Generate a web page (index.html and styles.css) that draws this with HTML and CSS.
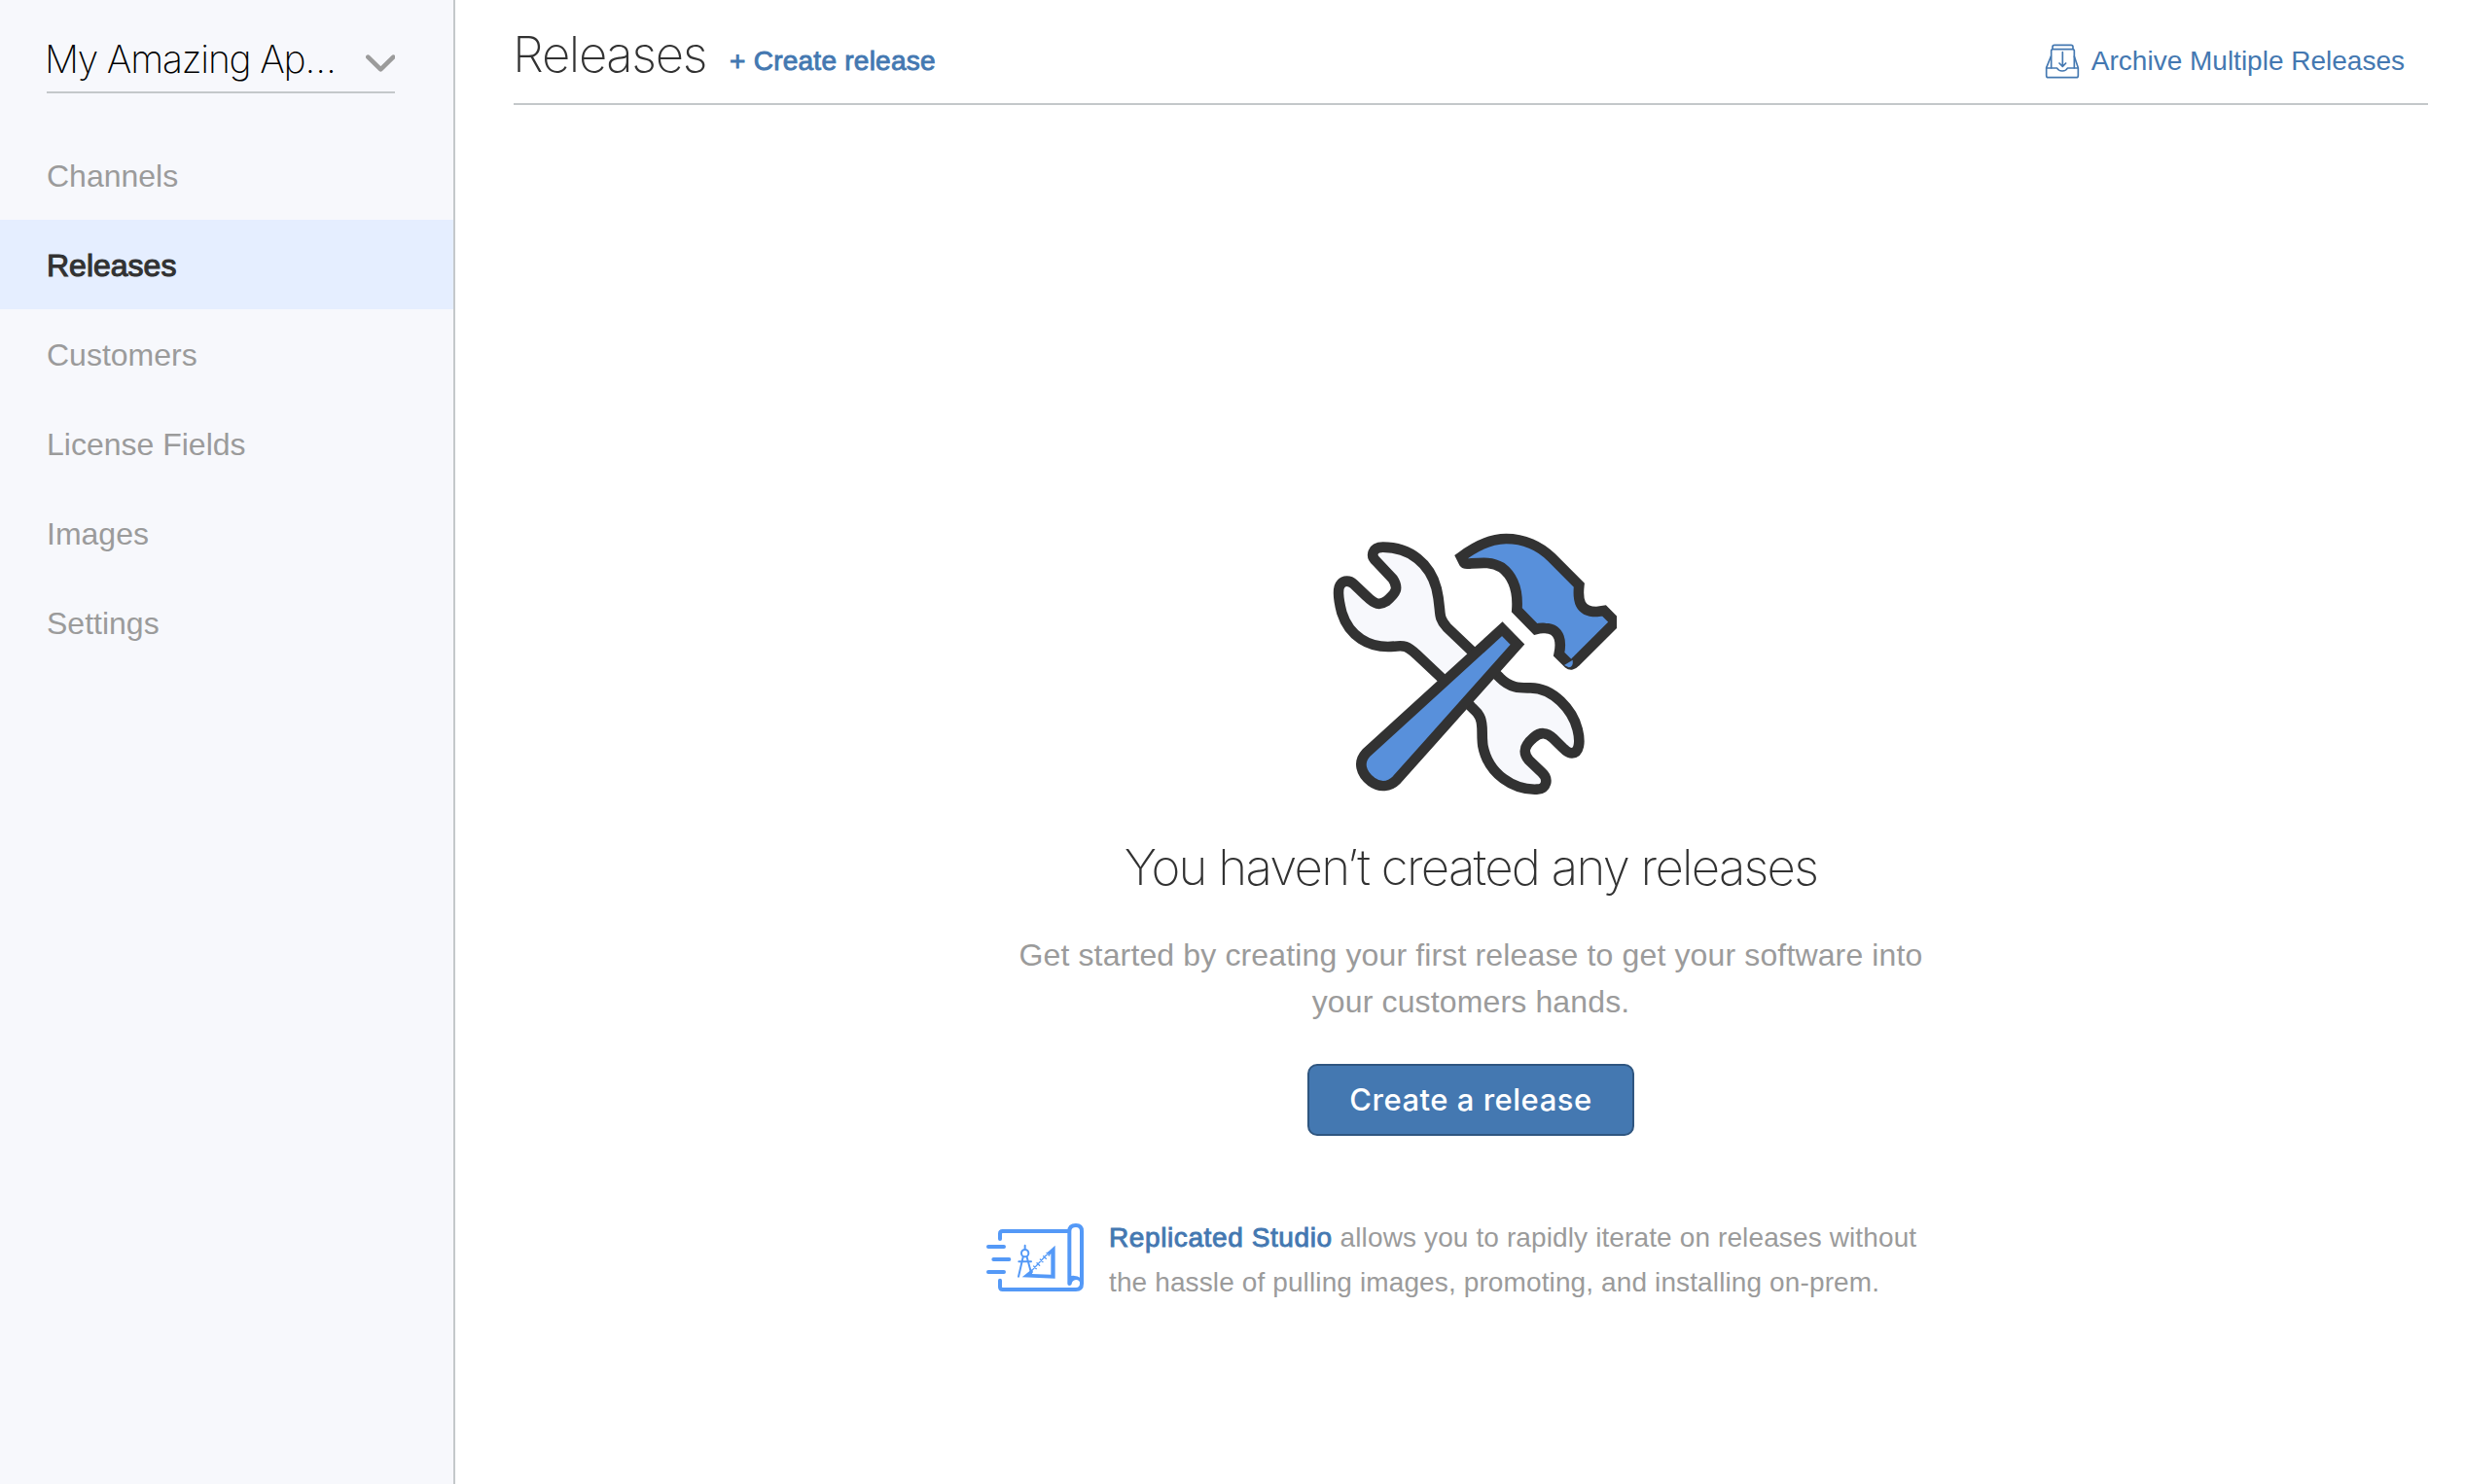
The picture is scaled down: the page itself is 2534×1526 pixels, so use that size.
FILE: index.html
```html
<!DOCTYPE html>
<html lang="en">
<head>
<meta charset="utf-8">
<title>Releases</title>
<link rel="stylesheet" href="styles.css">
</head>
<body>
<div class="app">
  <aside class="sidebar">
    <div class="app-select">
      <span class="app-name">My Amazing Ap…</span>
      <svg class="chevron" viewBox="1128 168 90 54"><path d="M1135 176L1174 214L1213 176"/></svg>
    </div>
    <nav class="nav">
      <a class="nav-item">Channels</a>
      <a class="nav-item active">Releases</a>
      <a class="nav-item">Customers</a>
      <a class="nav-item">License Fields</a>
      <a class="nav-item">Images</a>
      <a class="nav-item">Settings</a>
    </nav>
  </aside>
  <main class="main">
    <header class="header">
      <h1 class="title">Releases</h1>
      <a class="create-link">+ Create release</a>
      <a class="archive-link">
        <svg class="archive-icon" viewBox="68 76 108 108">
          <path d="M92 92V86Q92 80 98 80H149Q155 80 155 86V92"/>
          <path d="M88 150V98Q88 93 93 93H154Q159 93 159 98V150"/>
          <path d="M87 115L73 150V174Q73 180 79 180H165Q171 180 171 174V150L159 115"/>
          <path d="M73 151H106Q110 160 122 160T138 151H171"/>
          <path d="M123 102V144M113 136L123 146L133 136"/>
        </svg>
        <span>Archive Multiple Releases</span>
      </a>
    </header>
    <section class="empty">
      <svg class="tools" viewBox="0 0 936 900">
        <path class="wrench" d="M215 98C300 98 360 150 380 225C398 300 380 310 412 345L575 500C610 535 640 532 670 532C740 532 800 600 815 660C825 700 820 733 798 733C785 733 780 728 740 688C720 668 700 668 680 685C650 710 645 730 665 755L705 793C727 813 720 845 690 845C620 848 540 800 523 710C518 670 525 650 515 625C508 605 490 595 485 588L392 498L320 430C290 402 280 400 250 404C170 412 110 370 88 300C75 250 75 222 85 212C95 200 112 200 125 212L165 250C190 275 205 278 225 265C255 240 265 225 245 195L195 142C175 125 182 98 215 98Z"/>
        <path class="hammer" d="M583 350L630 398L258 815C235 838 205 840 180 822C145 795 138 760 163 733Z"/>
        <path class="hammer" d="M456 128C500 95 550 72 595 72C650 72 700 95 735 130L820 215C815 260 820 298 875 297L897 294L925 322Q930 330 925 336L808 453Q797 465 787 457L758 428C765 395 765 350 715 348C705 347 700 347 686 351L628 292C632 240 620 190 580 160C550 142 520 146 478 149Q468 150 465 146Z"/>
        <path class="chip" d="M774 462L800 446Q803 468 788 469Z"/>
      </svg>
      <h2 class="empty-title">You haven’t created any releases</h2>
      <p class="empty-text">Get started by creating your first release to get your software into<br>your customers hands.</p>
      <a class="button">Create a release</a>
      <div class="studio">
        <svg class="studio-icon" viewBox="42 54 300 210">
          <path d="M84 102V86Q84 78 92 78H296M84 230V250Q84 258 92 258H318Q336 258 336 240V78Q336 60 318 60Q298 60 298 78V240M48 126H96M64 165H112M48 204H96"/>
          <path class="solid" d="M298 217Q318 212 336 224V258H318Q331 252 331 240Q330 228 318 228Q306 229 304 243H296Z"/>
          <path class="solid" fill-rule="evenodd" d="M254 122V224L152 220L182 196L186 204L182 210L241 212V148L236 152L230 144Z"/>
          <path class="ticks" d="M234 144L182 200M188 186L196 194M198 176L206 184M208 165L216 173M218 155L226 163M228 145L236 153"/>
          <path class="thin" d="M161 122V134M155 158L141 218M167 158L180 206M142 172H180"/>
          <circle class="thin" cx="161" cy="146" r="11"/>
        </svg>
        <p class="studio-text"><b>Replicated Studio</b> allows you to rapidly iterate on releases without<br>the hassle of pulling images, promoting, and installing on-prem.</p>
      </div>
    </section>
  </main>
</div>
</body>
</html>
```
FILE: styles.css
```css
* { box-sizing: border-box; }
body { margin: 0; background: #fff; color: #323232; font-family: "Liberation Sans", Arial, sans-serif; }
h1, h2, p { margin: 0; font-weight: 400; }
.app { display: flex; height: 1526px; }
.sidebar { width: 468px; flex: none; background: #f7f8fc; border-right: 2px solid #c4c8ca; }
.app-select { display: flex; align-items: center; justify-content: space-between; margin: 0 60px 38px 48px; height: 96px; padding-top: 27px; border-bottom: 2px solid #c4c8ca; }
.app-name { margin-left: -2px; font: 200 39px/48px Inter, sans-serif; letter-spacing: -1.2px; color: #000; white-space: nowrap; }
.chevron { width: 30px; height: 18px; margin-top: 9px; fill: none; stroke: #9b9b9b; stroke-width: 14; stroke-linecap: round; stroke-linejoin: round; }
.nav-item { display: block; height: 92px; padding-left: 48px; font-size: 32px; line-height: 94px; color: #9b9b9b; }
.nav-item.active { background: #e5eeff; color: #323232; -webkit-text-stroke: 1.1px #323232; }
.main { flex: 1; padding: 0 38px 0 60px; display: flex; flex-direction: column; }
.header { display: flex; align-items: flex-start; height: 108px; padding-top: 24px; border-bottom: 2px solid #c4c8ca; color: #4478b1; font-size: 28px; }
.title { margin-left: -1px; font: 200 51px/64px Inter, sans-serif; letter-spacing: -1.4px; color: #323232; }
.create-link { margin: 23px 0 0 24px; line-height: 31px; letter-spacing: 0.25px; -webkit-text-stroke: 0.9px #4478b1; }
.archive-link { margin: 21px 24px 0 auto; display: flex; align-items: center; gap: 12px; }
.archive-icon { width: 36px; height: 36px; fill: none; stroke: #4478b1; stroke-width: 5; stroke-linejoin: round; stroke-linecap: round; }
.empty { display: flex; flex-direction: column; align-items: center; padding-top: 422px; }
.tools { width: 312px; height: 300px; margin-right: 12px; }
.wrench { fill: #f7f8fc; stroke: #323232; stroke-width: 32; }
.hammer { fill: #5890db; stroke: #323232; stroke-width: 32; }
.chip { fill: #5890db; }
.empty-title { margin-top: 30px; font: 200 51px/64px Inter, sans-serif; letter-spacing: -1.75px; white-space: nowrap; }
.empty-text { margin-top: 34px; font-size: 32px; line-height: 48px; letter-spacing: 0.14px; color: #9b9b9b; text-align: center; }
.button { margin-top: 40px; width: 336px; height: 74px; border: 2px solid #2f5680; border-radius: 10px; background: #4478b1; color: #fff; font: 500 31px/70px Inter, sans-serif; letter-spacing: 0.5px; text-align: center; }
.studio { display: flex; align-items: flex-start; gap: 26px; width: 996px; margin-top: 80px; }
.studio-icon { flex: none; width: 100px; height: 70px; margin-top: 10px; fill: none; stroke: #5499f7; stroke-width: 12; stroke-linecap: round; }
.studio-icon .solid { fill: #5499f7; stroke: none; }
.studio-icon .thin { stroke-width: 6; }
.studio-icon .ticks { stroke-width: 4; }
.studio-text { margin-top: 2px; font-size: 28px; line-height: 46px; letter-spacing: 0.12px; color: #9b9b9b; }
.studio-text b { font-weight: 400; color: #4478b1; letter-spacing: 0.6px; -webkit-text-stroke: 0.9px #4478b1; }
```
